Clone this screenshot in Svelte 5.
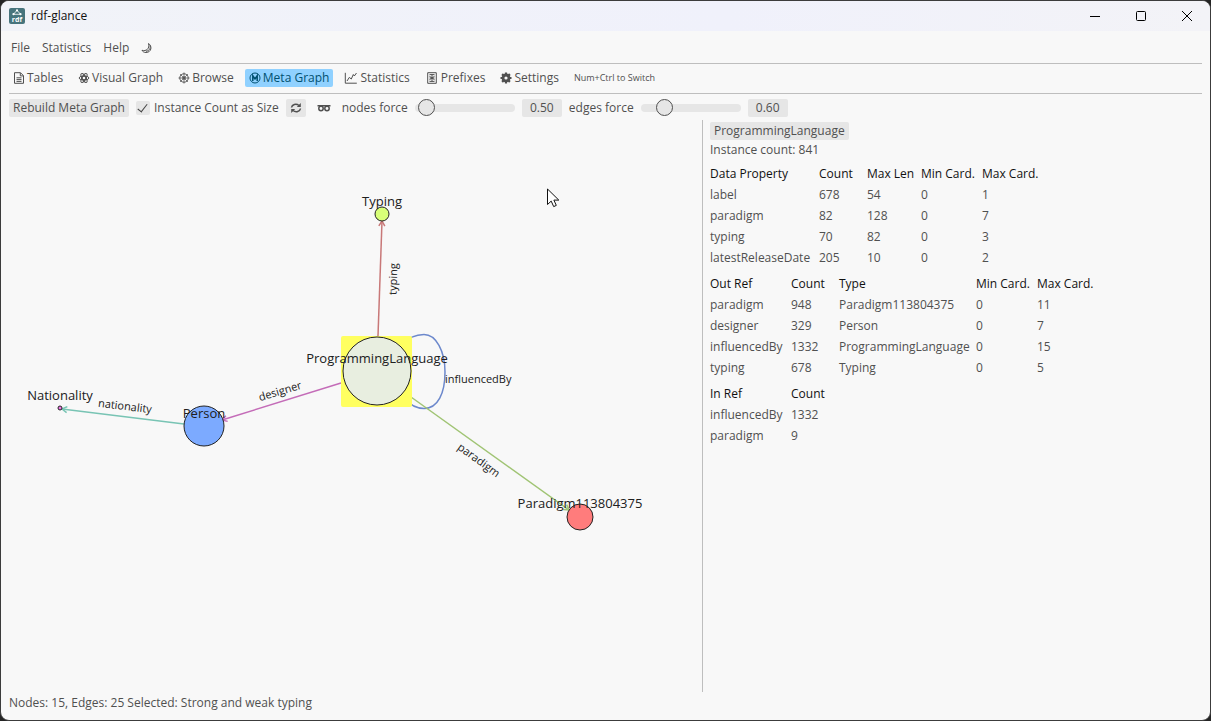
<script>
  const tabs = [
    { id: 'tables', label: 'Tables' },
    { id: 'visual', label: 'Visual Graph' },
    { id: 'browse', label: 'Browse' },
    { id: 'meta', label: 'Meta Graph' },
    { id: 'stats', label: 'Statistics' },
    { id: 'prefixes', label: 'Prefixes' },
    { id: 'settings', label: 'Settings' }
  ];
  let active = $state('meta');
  let nodesForce = $state(0.5);
  let edgesForce = $state(0.6);
  let countAsSize = $state(true);

  const tables = [
    {
      id: 'data',
      head: ['Data Property', 'Count', 'Max Len', 'Min Card.', 'Max Card.'],
      rows: [
        ['label', 678, 54, 0, 1],
        ['paradigm', 82, 128, 0, 7],
        ['typing', 70, 82, 0, 3],
        ['latestReleaseDate', 205, 10, 0, 2]
      ]
    },
    {
      id: 'out',
      head: ['Out Ref', 'Count', 'Type', 'Min Card.', 'Max Card.'],
      rows: [
        ['paradigm', 948, 'Paradigm113804375', 0, 11],
        ['designer', 329, 'Person', 0, 7],
        ['influencedBy', 1332, 'ProgrammingLanguage', 0, 15],
        ['typing', 678, 'Typing', 0, 5]
      ]
    },
    {
      id: 'in',
      head: ['In Ref', 'Count'],
      rows: [
        ['influencedBy', 1332],
        ['paradigm', 9]
      ]
    }
  ];

  const edges = [
    { label: 'typing', color: '#c87878', x1: 377, y1: 216, x2: 381, y2: 101, lx: 392, ly: 159, angle: -88 },
    { label: 'designer', color: '#c46cb8', x1: 340, y1: 263, x2: 221, y2: 300, lx: 279, ly: 271, angle: -17 },
    { label: 'nationality', color: '#78c4b4', x1: 183, y1: 304, x2: 61, y2: 289, lx: 124, ly: 286, angle: 7 },
    { label: 'paradigm', color: '#a0c474', x1: 410, y1: 277, x2: 568, y2: 390, lx: 478, ly: 340, angle: 36 }
  ];

  const nodes = [
    { label: 'Typing', x: 381, y: 94, r: 7, labelY: 86, fill: '#d8ff78' },
    { label: 'ProgrammingLanguage', x: 376, y: 251, r: 34, labelY: 243, fill: '#e8eee0' },
    { label: 'Person', x: 203, y: 306, r: 20, labelY: 298, fill: '#7caaff' },
    { label: 'Nationality', x: 59, y: 288, r: 2, labelY: 280, fill: '#f078e8' },
    { label: 'Paradigm113804375', x: 579, y: 397, r: 13, labelY: 388, fill: '#ff7c7c' }
  ];
  const heading = (e) => (Math.atan2(e.y2 - e.y1, e.x2 - e.x1) * 180) / Math.PI;
</script>

{#snippet tabIcon(id)}
  <svg class="glyph" class:wide={id === 'stats' || id === 'prefixes'} viewBox="0 0 12 12" aria-hidden="true">
    {#if id === 'tables'}
      <path d="M1.5.7h6l3 3v7.6h-9zM7.3.9v3h3M3.5 5.8h5M3.5 7.6h5M3.5 9.4h5" />
    {:else if id === 'visual'}
      <ellipse cx="6" cy="6" rx="5" ry="2" />
      <ellipse cx="6" cy="6" rx="5" ry="2" transform="rotate(60 6 6)" />
      <ellipse cx="6" cy="6" rx="5" ry="2" transform="rotate(120 6 6)" />
      <circle cx="6" cy="6" r="2" />
    {:else if id === 'browse'}
      <circle cx="6" cy="6" r="4.2" /><circle cx="6" cy="6" r="1.3" />
      <path class="fine" d="M6 .4v11.2M.4 6h11.2M2 2l8 8M10 2l-8 8" />
    {:else if id === 'meta'}
      <circle cx="6" cy="6" r="5" /><path class="thick" d="M3.8 9V3.7L6 7l2.2-3.3V9" />
    {:else if id === 'stats'}
      <path d="M.3.8v10.4h11.500M2 9l2.300-3.600 2 1.600 2-4.500 1 1.500L11.500 1" />
    {:else if id === 'prefixes'}
      <path d="M1.700.700h8.600v10.600H1.700z" />
      <path d="M3.500 2.600h5M3.500 9.400h5M6 2.500v7M3.400 4.200l5.200 3.600M8.600 4.200L3.400 7.800M3.500 6h5" />
    {:else}
      <path class="gear" d="M6 .5v3M6 8.500v3M.5 6h3M8.500 6h3M2.100 2.100l2 2M7.900 7.900l2 2M9.900 2.100l-2 2M4.100 7.900l-2 2" />
      <circle cx="6" cy="6" r="3" class="ring" />
    {/if}
  </svg>
{/snippet}

<div class="window">
  <header class="titlebar">
    <svg class="logo" viewBox="0 0 16 16" aria-hidden="true">
      <rect width="16" height="16" rx="2" fill="#47747c" />
      <path d="M8 2.300L4.400 6.300h7.200z" fill="none" stroke="#fff" stroke-width=".8" />
      <circle cx="8" cy="2.400" r="1.100" fill="#fff" /><circle cx="4.500" cy="6.200" r="1.100" fill="#fff" /><circle cx="11.500" cy="6.200" r="1.100" fill="#fff" />
      <text x="8" y="13.600" text-anchor="middle">rdf</text>
    </svg>
    <h1>rdf-glance</h1>
    <div class="controls">
      <button aria-label="Minimize"><svg viewBox="0 0 12 12"><path d="M1 6.500h10" /></svg></button>
      <button aria-label="Maximize"><svg viewBox="0 0 12 12"><rect x="1.500" y="1.500" width="9" height="9" rx="1" /></svg></button>
      <button aria-label="Close"><svg viewBox="0 0 12 12"><path d="M1 1l10 10M11 1L1 11" /></svg></button>
    </div>
  </header>

  <nav class="menu">
    <button>File</button>
    <button>Statistics</button>
    <button>Help</button>
    <button aria-label="Dark mode">
      <svg class="glyph" viewBox="0 0 12 12"><path d="M7.500 1.500c4 2.500 3 9-2.500 9-2 0-3.500-1-4-2.200 4 1.200 8-1.500 6.500-6.800zM9 3.500c.8 3-1 5.500-4 5.800" /></svg>
    </button>
  </nav>

  <nav class="tabs">
    {#each tabs as tab}
      <button class:active={active === tab.id} onclick={() => (active = tab.id)}>
        {@render tabIcon(tab.id)}{tab.label}
      </button>
    {/each}
    <small>Num+Ctrl to Switch</small>
  </nav>

  <div class="tools">
    <button class="fill">Rebuild Meta Graph</button>
    <label class="check"><input type="checkbox" bind:checked={countAsSize} />Instance Count as Size</label>
    <button class="fill icon" aria-label="Refresh layout">
      <svg class="glyph" viewBox="0 0 12 12"><path class="thick" d="M1.500 5.500C2 2.500 6 1 9 3.500M10.500 6.500C10 9.500 6 11 3 8.500" /><path class="solid" d="M10.800 1v4H6.800zM1.200 11V7h4z" /></svg>
    </button>
    <button class="icon" aria-label="Hide unrelated">
      <svg class="mask" viewBox="0 0 14 12"><path class="solid" d="M.5 3h13v1.500h-13z" /><circle class="thick" cx="4" cy="6.500" r="2.200" /><circle class="thick" cx="10" cy="6.500" r="2.200" /></svg>
    </button>
    <label for="nodes-force">nodes force</label>
    <input id="nodes-force" type="range" min="0" max="14" step="0.1" bind:value={nodesForce} />
    <input class="value" aria-label="nodes force value" value={nodesForce.toFixed(2)} />
    <label for="edges-force">edges force</label>
    <input id="edges-force" type="range" min="0" max="3.3" step="0.1" bind:value={edgesForce} />
    <input class="value" aria-label="edges force value" value={edgesForce.toFixed(2)} />
  </div>

  <main>
    <svg class="graph" role="img" aria-label="Meta graph">
      <path class="edge" stroke="#6c88cc" d="M399 225C409 216 416 214.500 423 214.500 435 214.500 444 231 444 252S437 288.500 423 288.500C416 288.500 409 285 403 278" />
      {#each edges as e}
        <g class="edge" stroke={e.color}>
          <line x1={e.x1} y1={e.y1} x2={e.x2} y2={e.y2} />
          <path d="M-5-3L0 0-5 3" transform="translate({e.x2} {e.y2}) rotate({heading(e)})" />
        </g>
      {/each}
      <rect x="340" y="216" width="71" height="71" rx="2" fill="#ffff60" />
      {#each nodes as n}
        <circle class="node" cx={n.x} cy={n.y} r={n.r} fill={n.fill} />
      {/each}
      {#each nodes as n}
        <text x={n.x} y={n.labelY} text-anchor="middle">{n.label}</text>
      {/each}
      {#each edges as e}
        <text class="small" text-anchor="middle" transform="translate({e.lx} {e.ly}) rotate({e.angle})" dy="4">{e.label}</text>
      {/each}
      <text class="small" x="444" y="263">influencedBy</text>
      <path d="M546.500 69v15.500l3.700-3.400 2.500 5.500 2.600-1.200-2.400-5.300h4.900z" fill="#fff" stroke="#111" />
    </svg>

    <aside>
      <button class="fill">ProgrammingLanguage</button>
      <p>Instance count: 841</p>
      {#each tables as t}
        <table class={t.id}>
          <thead><tr>{#each t.head as h}<th>{h}</th>{/each}</tr></thead>
          <tbody>
            {#each t.rows as row}<tr>{#each row as cell}<td>{cell}</td>{/each}</tr>{/each}
          </tbody>
        </table>
      {/each}
    </aside>
  </main>

  <footer>Nodes: 15, Edges: 25 Selected: Strong and weak typing</footer>
</div>

<style>
  :global(body) { background: #242424; }
  * { box-sizing: border-box; }
  .window {
    display: flex;
    flex-direction: column;
    min-height: 100vh;
    border: 1px solid #3c3c3c;
    border-radius: 9px;
    overflow: hidden;
    background: #f8f8f8;
    color: #505050;
    font: 12px/18px "Open Sans", "Noto Sans", sans-serif;
  }
  button, input { font: inherit; color: inherit; margin: 0; }
  button { display: flex; align-items: center; gap: 2px; height: 18px; padding: 0 4px; border: 0; border-radius: 2px; background: none; white-space: nowrap; }
  svg { flex: none; fill: none; stroke: currentColor; }
  .glyph { width: 12px; height: 12px; }
  .wide { width: 14px; }
  .fine { stroke-width: 0.7; }
  .thick { stroke-width: 1.5; }
  .gear { stroke-width: 2.2; }
  .ring { stroke-width: 2.8; }
  .solid { fill: currentColor; stroke: none; }

  .titlebar { display: flex; align-items: center; height: 30px; padding-left: 8px; gap: 6px; background: linear-gradient(90deg, #f1f3f8, #f0f1fb 60%, #f3f3f7); color: #111; }
  .logo { width: 16px; height: 16px; stroke: none; }
  .logo text { font-size: 7px; font-weight: 700; fill: #fff; }
  h1 { margin: 0; font-size: 12px; font-weight: 400; }
  .controls { display: flex; margin-left: auto; }
  .controls button { width: 46px; height: 30px; justify-content: center; padding: 0; }
  .controls svg { width: 12px; height: 12px; stroke: #000; }

  .menu, .tabs, .tools { display: flex; align-items: center; padding: 0 8px; }
  .menu { height: 32px; gap: 4px; padding: 2px 6px 0; }
  .tabs { height: 31px; gap: 7px; margin: 0 8px; padding: 0 0 2px; border: 1px solid #bebebe; border-width: 1px 0; }
  .tabs .active { background: #90d1ff; color: #005070; }
  small { margin-left: 4px; font-size: 9px; }

  .tools { height: 26px; gap: 7px; padding-top: 2px; }
  .fill { background: #e6e6e6; }
  .check { display: flex; align-items: center; gap: 4px; }
  .check input { appearance: none; display: grid; place-items: center; width: 14px; height: 14px; border-radius: 2px; background: #e6e6e6; }
  .check input:checked::after { content: ""; width: 4px; height: 9px; margin-bottom: 2px; border: solid #444; border-width: 0 1px 1px 0; transform: rotate(38deg); }
  .mask { width: 14px; height: 12px; }
  input[type="range"] { appearance: none; width: 100px; height: 18px; background: none; }
  input[type="range"]::-webkit-slider-runnable-track { height: 8px; border-radius: 4px; background: #e6e6e6; }
  input[type="range"]::-webkit-slider-thumb { appearance: none; width: 17px; height: 17px; margin-top: -5px; border: 1px solid #505050; border-radius: 50%; background: #e6e6e6; }
  .value { width: 40px; height: 18px; padding: 0; border: 0; border-radius: 2px; background: #e6e6e6; text-align: center; }

  main { flex: 1; display: grid; grid-template-columns: minmax(0, 701fr) minmax(0, 508fr); }
  .graph { width: 100%; height: 100%; min-height: 480px; stroke: none; }
  .graph text { fill: #202020; font-size: 13px; }
  .graph .small { font-size: 11px; }
  .edge { stroke-width: 1.5; fill: none; }
  .node { stroke: #222; stroke-width: 1; }
  aside { border-left: 1px solid #bebebe; padding: 2px 0 0 7px; }
  p { margin: 0 0 4px; line-height: 19px; }
  table { table-layout: fixed; border-collapse: collapse; width: 388px; margin-bottom: 5px; }
  th, td { height: 21px; padding: 0; font-weight: 400; text-align: left; white-space: nowrap; }
  th { width: 48px; color: #111; }
  th:first-child { width: 81px; }
  .data th:first-child { width: 109px; }
  .data th:nth-child(3) { width: 54px; }
  .out th:nth-child(3) { width: 137px; }
  th:nth-child(4), th:nth-child(5) { width: 61px; }
  .data { width: 333px; }
  .in { width: 129px; }
  footer { height: 28px; padding: 2px 8px; }
</style>
